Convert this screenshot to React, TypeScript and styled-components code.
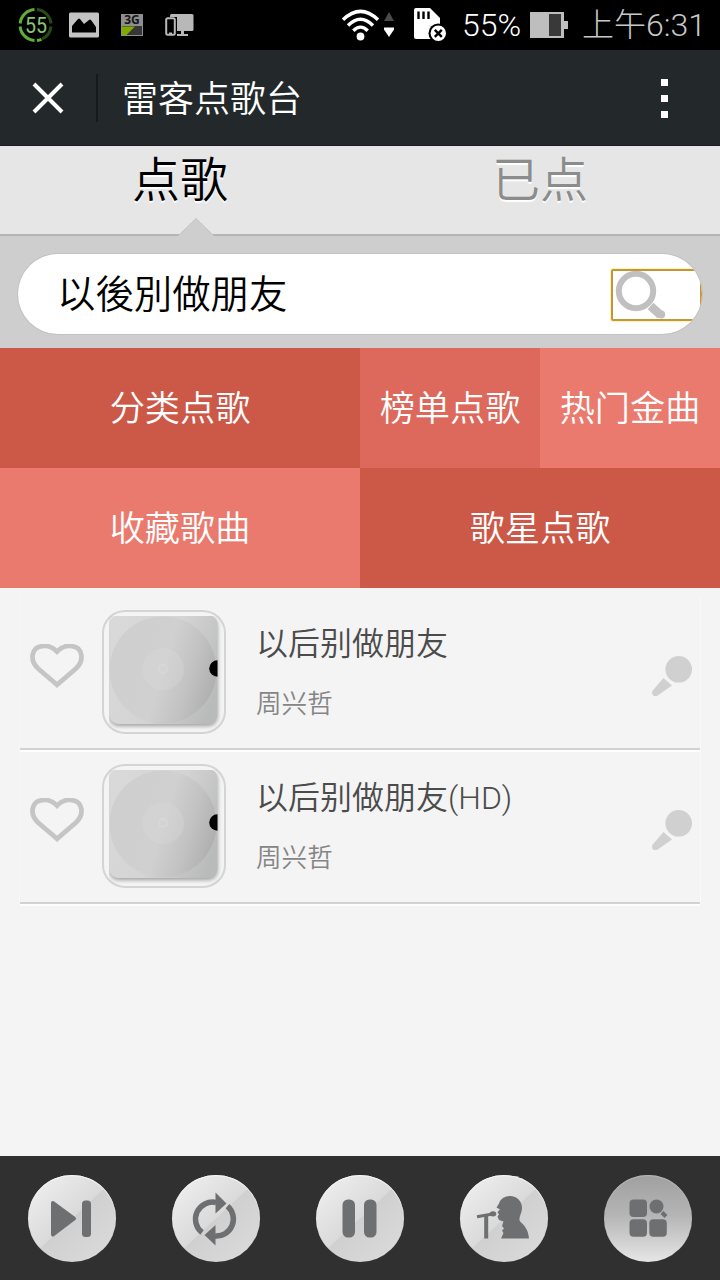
import React from "react";
import styled, { createGlobalStyle } from "styled-components";

const GlobalStyle = createGlobalStyle`
  *, *::before, *::after { box-sizing: border-box; }
  html, body { margin: 0; padding: 0; }
  body {
    background: #f4f4f4;
    font-family: Roboto, "Noto Sans CJK SC", "Liberation Sans", sans-serif;
  }
  svg { display: block; flex: none; }
`;

const Screen = styled.div`
  width: 720px;
  height: 1280px;
  display: flex;
  flex-direction: column;
  overflow: hidden;
  background: #f4f4f4;
`;

const StatusBar = styled.div`
  height: 50px;
  flex: none;
  display: flex;
  align-items: center;
  justify-content: space-between;
  padding: 0 14px 0 18px;
  background: #000;
`;

const StatusGroup = styled.div<{ $gap?: number; $offset?: number }>`
  display: flex;
  align-items: center;
  gap: ${(p) => p.$gap ?? 0}px;
  margin-left: ${(p) => p.$offset ?? 0}px;
`;

const Percent = styled.span`
  margin-left: 14px;
  width: 68px;
  font-size: 32px;
  font-weight: 350;
  line-height: 50px;
  color: #fff;
`;

const Clock = styled.span`
  margin-left: 14px;
  font-size: 32px;
  font-weight: 300;
  line-height: 49px;
  color: #c8c8c8;
  white-space: nowrap;
`;

const Header = styled.header`
  height: 96px;
  flex: none;
  display: flex;
  align-items: center;
  padding: 0 50px 0 32px;
  background: #23292b;
  border-bottom: 1px solid #1d1a22;
`;

const Divider = styled.span`
  width: 2px;
  height: 48px;
  margin: 0 24px 0 32px;
  background: #151a1b;
`;

const Title = styled.h1`
  flex: 1;
  margin: 0;
  padding-top: 5px;
  font-size: 36px;
  font-weight: 350;
  line-height: 90px;
  color: #fff;
`;

const MenuDots = styled.span`
  display: flex;
  flex-direction: column;
  gap: 9px;
  width: 12px;
  padding-top: 1px;
  align-items: center;
`;

const MenuDot = styled.i`
  width: 7px;
  height: 7px;
  background: #fff;
`;

const Tabs = styled.nav`
  position: relative;
  height: 90px;
  flex: none;
  display: grid;
  grid-template-columns: 1fr 1fr;
  background: #e6e6e6;
  border-bottom: 2px solid #b5b5b5;
`;

const Tab = styled.span<{ $active?: boolean }>`
  font-size: 48px;
  line-height: 70px;
  text-align: center;
  font-weight: 350;
  color: ${(p) => (p.$active ? "#000" : "#8c8c8c")};
  text-shadow: 0 2px 1px #fff;
`;

const Notch = styled.svg`
  position: absolute;
  left: 176px;
  bottom: -2px;
`;

const SearchSection = styled.div`
  height: 112px;
  flex: none;
  padding: 18px 18px 14px;
  background: #cecece;
`;

const SearchField = styled.div`
  height: 80px;
  display: flex;
  align-items: center;
  justify-content: space-between;
  padding-left: 39px;
  overflow: hidden;
  border-radius: 40px;
  background: #fff;
  box-shadow: 0 0 0 1px #c2c2c2;
`;

const Query = styled.span`
  padding-top: 2px;
  font-size: 38.4px;
  line-height: 80px;
  font-weight: 350;
  color: #000;
`;

const SearchButton = styled.span`
  width: 91px;
  height: 52px;
  margin-top: 2px;
  border: 2px solid #c4963a;
  border-radius: 2px;
  box-shadow: 0 0 1px 1px #fdf3b0;
`;

const Categories = styled.div`
  height: 240px;
  flex: none;
  display: grid;
  grid-template-columns: 2fr 1fr 1fr;
  grid-template-rows: 120px 120px;
`;

const Category = styled.span<{ $bg: string; $wide?: boolean }>`
  grid-column: span ${(p) => (p.$wide ? 2 : 1)};
  background: ${(p) => p.$bg};
  color: #fff;
  font-size: 35.2px;
  font-weight: 350;
  line-height: 122px;
  text-align: center;
  white-space: nowrap;
`;

const SongList = styled.ul`
  flex: 1;
  margin: 0;
  padding: 8px 20px 0;
  list-style: none;
`;

const SongRow = styled.li`
  height: 154px;
  display: flex;
  align-items: flex-start;
  padding: 14px 8px 0 10px;
  border-bottom: 2px solid #d2d2d2;
  box-shadow: 0 2px 0 #fdfdfd, -1px 0 0 #f7f7f7, 1px 0 0 #f8f8f8;
  svg.heart { margin: 34px 18px 0 0; }
  svg.mic { margin-top: 46px; }
`;

const Cover = styled.div`
  width: 124px;
  height: 124px;
  flex: none;
  padding: 4px 0 0 5px;
  border: 2px solid #d4d4d4;
  border-radius: 23px;
  background: #f4f4f4;
`;

const SongText = styled.div`
  flex: 1;
  display: flex;
  flex-direction: column;
  padding-left: 30px;
`;

const SongTitle = styled.span`
  font-size: 32px;
  line-height: 68px;
  font-weight: 350;
  color: #4b4b4b;
`;

const Artist = styled.span`
  font-size: 25.6px;
  line-height: 53px;
  font-weight: 350;
  color: #858585;
`;

const Controls = styled.footer`
  height: 124px;
  flex: none;
  display: grid;
  grid-template-columns: repeat(5, 1fr);
  justify-items: center;
  align-items: center;
  background: #303030;
`;

const ControlButton = styled.button<{ $pressed?: boolean }>`
  width: 88px;
  height: 87px;
  margin-top: 1px;
  padding: 0;
  border: 0;
  border-radius: 50%;
  background: ${(p) =>
    p.$pressed
      ? "linear-gradient(180deg, #a0a0a0 0%, #b4b4b4 45%, #e6e6e6 100%)"
      : "linear-gradient(137deg, #f2f2f2 0%, #dadada 49.5%, #d0d0d0 50.5%, #dcdcdc 100%)"};
  box-shadow: inset 0 1px 1px ${(p) => (p.$pressed ? "#b8b8b8" : "#f6f6f6")};
`;

function BatterySaver() {
  return (
    <svg width="35" height="36" viewBox="0 0 35 36">
      <g fill="none" strokeWidth="3">
        <path d="M16.5 2.5A15.5 15.5 0 0 0 2.1 16.5M2.1 19.5A15.5 15.5 0 0 0 16.5 33.5M19 33.5A15.5 15.5 0 0 0 23.5 32.3" stroke="#5fae35" />
        <path d="M19 2.5A15.5 15.5 0 0 1 33 16.5M33 19.5A15.5 15.5 0 0 1 24 32" stroke="#264c15" />
      </g>
      <text x="18" y="25.5" textAnchor="middle" fontSize="22" textLength="22" lengthAdjust="spacingAndGlyphs" fill="#86c876">55</text>
    </svg>
  );
}

function PictureIcon() {
  return (
    <svg width="30" height="26" viewBox="0 0 30 26">
      <rect width="30" height="25" rx="1.5" y="0.5" fill="#c4c4c4" />
      <path d="M3 20.5V14L9 7q1-1 2 0l4 5 5-4q1-.8 2 0l5 7v5.5Z" fill="#000" />
    </svg>
  );
}

function DataIcon() {
  return (
    <svg width="22" height="34" viewBox="0 -6 22 34">
      <rect width="22" height="22" fill="#8e8e8e" />
      <rect x="1" y="12" width="20" height="9" fill="#363636" />
      <path d="M1 12.5h13L5.5 21H1Z" fill="#82a900" />
      <text x="11" y="10.3" textAnchor="middle" fontFamily="Open Sans, sans-serif" fontWeight="700" fontSize="12" fill="#161616">3G</text>
    </svg>
  );
}

function DevicesIcon() {
  return (
    <svg width="29" height="24" viewBox="0 0 29 24">
      <rect x="5" y="1" width="23.5" height="17" rx="1.5" fill="#b8b8b8" />
      <path d="M16 18h3v3h4v2H12v-2h4Z" fill="#b8b8b8" />
      <rect x="0" y="4" width="12" height="20" fill="#000" />
      <rect x="1.2" y="5.2" width="8.6" height="16.6" rx="1.5" fill="#000" stroke="#b8b8b8" strokeWidth="2" />
      <path d="M4 20.5h3" stroke="#b8b8b8" strokeWidth="2" />
    </svg>
  );
}

function WifiIcon() {
  return (
    <svg width="53" height="34" viewBox="0 0 53 34">
      <g fill="none" stroke="#fff" strokeWidth="3.4">
        <path d="M2 11.8Q19.5-5 37 11.8" />
        <path d="M7 17.5Q19.5 5 32 17.5" />
        <path d="M12.3 22.7Q19.5 15.5 26.7 22.7" />
      </g>
      <circle cx="19.5" cy="28.5" r="3.9" fill="#fff" />
      <path d="M43 13l5-9 5 9Z" fill="#4a4a4a" />
      <path d="M43 19.5h10v2l-5 7.5-5-7.5Z" fill="#fff" />
    </svg>
  );
}

function StorageIcon() {
  return (
    <svg width="34" height="34" viewBox="0 0 34 34">
      <path d="M2 0H16L26 10V31H2Q0 31 0 29V2Q0 0 2 0Z" fill="#fff" />
      <path d="M4.5 3.5V11M9.5 3.5V11M14.5 3.5V11" stroke="#000" strokeWidth="2.4" />
      <circle cx="24.3" cy="25.3" r="9.8" fill="#000" />
      <circle cx="24.3" cy="25.3" r="7.7" fill="#fff" />
      <path d="M20.8 21.8l7 7M27.8 21.8l-7 7" stroke="#000" strokeWidth="2.4" />
    </svg>
  );
}

function BatteryIcon() {
  return (
    <svg width="38" height="26" viewBox="0 0 38 26">
      <path d="M0 0H34V9H38V17H34V26H0Z" fill="#bebebe" />
      <rect x="19" y="2" width="12" height="22" fill="#393939" />
    </svg>
  );
}

function CloseIcon() {
  return (
    <svg width="32" height="32" viewBox="0 0 32 32">
      <path d="M2 2L30 30M30 2L2 30" stroke="#fff" strokeWidth="4" />
    </svg>
  );
}

function SearchIcon() {
  return (
    <svg width="56" height="48" viewBox="0 0 56 48">
      <circle cx="23" cy="20" r="17.2" fill="none" stroke="#c0c0c0" strokeWidth="6" />
      <path d="M37.5 35L47.5 44" stroke="#c0c0c0" strokeWidth="8.5" />
      <circle cx="48.3" cy="43.5" r="3.9" fill="#c0c0c0" />
    </svg>
  );
}

function HeartIcon() {
  return (
    <svg className="heart" width="54" height="44" viewBox="0 0 54 44">
      <path
        d="M27 40.8L8 24.5C-.5 16.5 1 3.5 12 2.2C19 1 24 4.5 27 7.5C30 4.5 35 1 42 2.2C53 3.5 54.5 16.5 46 24.5Z"
        fill="none"
        stroke="#c5c5c5"
        strokeWidth="4.8"
      />
    </svg>
  );
}

function MicIcon() {
  return (
    <svg className="mic" width="40" height="40" viewBox="0 0 40 40">
      <circle cx="26.7" cy="13.3" r="13.3" fill="#d0d0d0" />
      <path d="M11.5 22L20 29.5L5 40H2Q-.5 39 .3 35Z" fill="#d0d0d0" />
    </svg>
  );
}

function DiscArt() {
  return (
    <svg width="114" height="114" viewBox="0 0 114 114">
      <defs>
        <linearGradient id="sleeve" x1="0" y1="0.3" x2="1" y2="0.7">
          <stop offset="0" stopColor="#d9d9d9" />
          <stop offset="0.5" stopColor="#d4d4d4" />
          <stop offset="1" stopColor="#b9bbba" />
        </linearGradient>
        <linearGradient id="vinyl" x1="0" y1="0.35" x2="1" y2="0.65">
          <stop offset="0" stopColor="#cfcfcf" />
          <stop offset="0.5" stopColor="#d0d0d0" />
          <stop offset="0.75" stopColor="#c2c2c2" />
          <stop offset="1" stopColor="#aeaeae" />
        </linearGradient>
        <filter id="sleeveShadow" x="-10%" y="-10%" width="120%" height="120%">
          <feDropShadow dx="0" dy="2" stdDeviation="2" floodColor="#777" floodOpacity="0.7" />
        </filter>
        <clipPath id="sleeveClip">
          <rect x="0.5" y="-1" width="108" height="109" rx="9" />
        </clipPath>
      </defs>
      <rect x="0.5" y="-1" width="108" height="109" rx="9" fill="url(#sleeve)" filter="url(#sleeveShadow)" />
      <g clipPath="url(#sleeveClip)">
        <circle cx="54" cy="54" r="53.5" fill="url(#vinyl)" />
        <circle cx="54" cy="53" r="21" fill="#d6d6d6" opacity="0.4" />
        <circle cx="54" cy="53" r="5" fill="#d7d7d7" />
        <circle cx="54" cy="53" r="3" fill="#d3d3d3" />
        <circle cx="108.5" cy="52.5" r="8.3" fill="#000" />
      </g>
    </svg>
  );
}

const INK = "#6d6f71";

function NextGlyph() {
  return (
    <svg width="88" height="88" viewBox="0 0 88 88">
      <path d="M25 28L46 43.5L25 59.5Z" fill={INK} stroke={INK} strokeWidth="4" strokeLinejoin="round" />
      <rect x="54" y="25.5" width="9" height="36.5" rx="3.5" fill={INK} />
    </svg>
  );
}

function RepeatGlyph() {
  return (
    <svg width="88" height="88" viewBox="0 0 88 88">
      <g fill="none" stroke={INK} strokeWidth="5.5">
        <path d="M30 57.5A17 17 0 0 1 44 27.5" />
        <path d="M55.5 31.2A17 17 0 0 1 43 61" />
      </g>
      <path d="M43.5 17.5L54.5 28.5L43.5 38.5Z" fill={INK} />
      <path d="M43.5 50V70.5L32.5 60Z" fill={INK} />
    </svg>
  );
}

function PauseGlyph() {
  return (
    <svg width="88" height="88" viewBox="0 0 88 88">
      <rect x="26.5" y="24.5" width="12.5" height="38" rx="5.5" fill={INK} />
      <rect x="48" y="24.5" width="12.5" height="38" rx="5.5" fill={INK} />
    </svg>
  );
}

function SingerGlyph() {
  return (
    <svg width="88" height="88" viewBox="0 0 88 88">
      <path
        d="M41 63.5L43.5 58L42 55.5L44 53.5L42 51L43.5 46.5L39 45L37.5 41.5L39 39.5L37.5 37L40 34.5L36.5 32.5L39 28.5C40 24 45 21 50 21C57 21 62 26 62 33C62 38 59 41 59.5 45C60 48.5 68 50 69 63.5Z"
        fill={INK}
      />
      <path d="M17 41.8L34 38.8" stroke={INK} strokeWidth="3" />
      <ellipse cx="33" cy="38.8" rx="3.3" ry="2.6" fill={INK} />
      <path d="M26.2 41V63.5" stroke={INK} strokeWidth="4" />
    </svg>
  );
}

function AppsGlyph() {
  return (
    <svg width="88" height="88" viewBox="0 0 88 88">
      <rect x="25.5" y="24.5" width="17.5" height="17.5" rx="4" fill={INK} />
      <rect x="25.5" y="44.3" width="17.5" height="17.5" rx="4" fill={INK} />
      <rect x="45.3" y="44.3" width="17.5" height="17.5" rx="4" fill={INK} />
      <circle cx="52.5" cy="31.5" r="7" fill={INK} />
      <path d="M58 37.5L62 41.5" stroke={INK} strokeWidth="4" />
    </svg>
  );
}

const songs = [
  { title: "以后别做朋友", artist: "周兴哲" },
  { title: "以后别做朋友(HD)", artist: "周兴哲" },
];

const controls = [
  { name: "next", glyph: <NextGlyph /> },
  { name: "repeat", glyph: <RepeatGlyph /> },
  { name: "pause", glyph: <PauseGlyph /> },
  { name: "singer", glyph: <SingerGlyph /> },
  { name: "apps", glyph: <AppsGlyph />, pressed: true },
];

export default function App() {
  return (
    <>
      <GlobalStyle />
      <Screen>
        <StatusBar>
          <StatusGroup>
            <StatusGroup $gap={16}>
              <BatterySaver />
              <PictureIcon />
            </StatusGroup>
            <StatusGroup $gap={22} $offset={22}>
              <DataIcon />
              <DevicesIcon />
            </StatusGroup>
          </StatusGroup>
          <StatusGroup>
            <StatusGroup $gap={20}>
              <WifiIcon />
              <StorageIcon />
            </StatusGroup>
            <Percent>55%</Percent>
            <BatteryIcon />
            <Clock>上午6:31</Clock>
          </StatusGroup>
        </StatusBar>

        <Header>
          <CloseIcon />
          <Divider />
          <Title>雷客点歌台</Title>
          <MenuDots>
            <MenuDot />
            <MenuDot />
            <MenuDot />
          </MenuDots>
        </Header>

        <Tabs>
          <Tab $active>点歌</Tab>
          <Tab>已点</Tab>
          <Notch width="40" height="18" viewBox="0 0 40 18">
            <path d="M2 18L20 0.5L38 18Z" fill="#cecece" />
            <path d="M2 18L20 0.5L38 18" fill="none" stroke="#c4c4c4" />
          </Notch>
        </Tabs>

        <SearchSection>
          <SearchField>
            <Query>以後別做朋友</Query>
            <SearchButton>
              <SearchIcon />
            </SearchButton>
          </SearchField>
        </SearchSection>

        <Categories>
          <Category $bg="#cc5848">分类点歌</Category>
          <Category $bg="#dc695c">榜单点歌</Category>
          <Category $bg="#ea7a6e">热门金曲</Category>
          <Category $bg="#ea7a6e">收藏歌曲</Category>
          <Category $bg="#cc5848" $wide>歌星点歌</Category>
        </Categories>

        <SongList>
          {songs.map((song) => (
            <SongRow key={song.title}>
              <HeartIcon />
              <Cover>
                <DiscArt />
              </Cover>
              <SongText>
                <SongTitle>{song.title}</SongTitle>
                <Artist>{song.artist}</Artist>
              </SongText>
              <MicIcon />
            </SongRow>
          ))}
        </SongList>

        <Controls>
          {controls.map((c) => (
            <ControlButton key={c.name} $pressed={c.pressed} aria-label={c.name}>
              {c.glyph}
            </ControlButton>
          ))}
        </Controls>
      </Screen>
    </>
  );
}
